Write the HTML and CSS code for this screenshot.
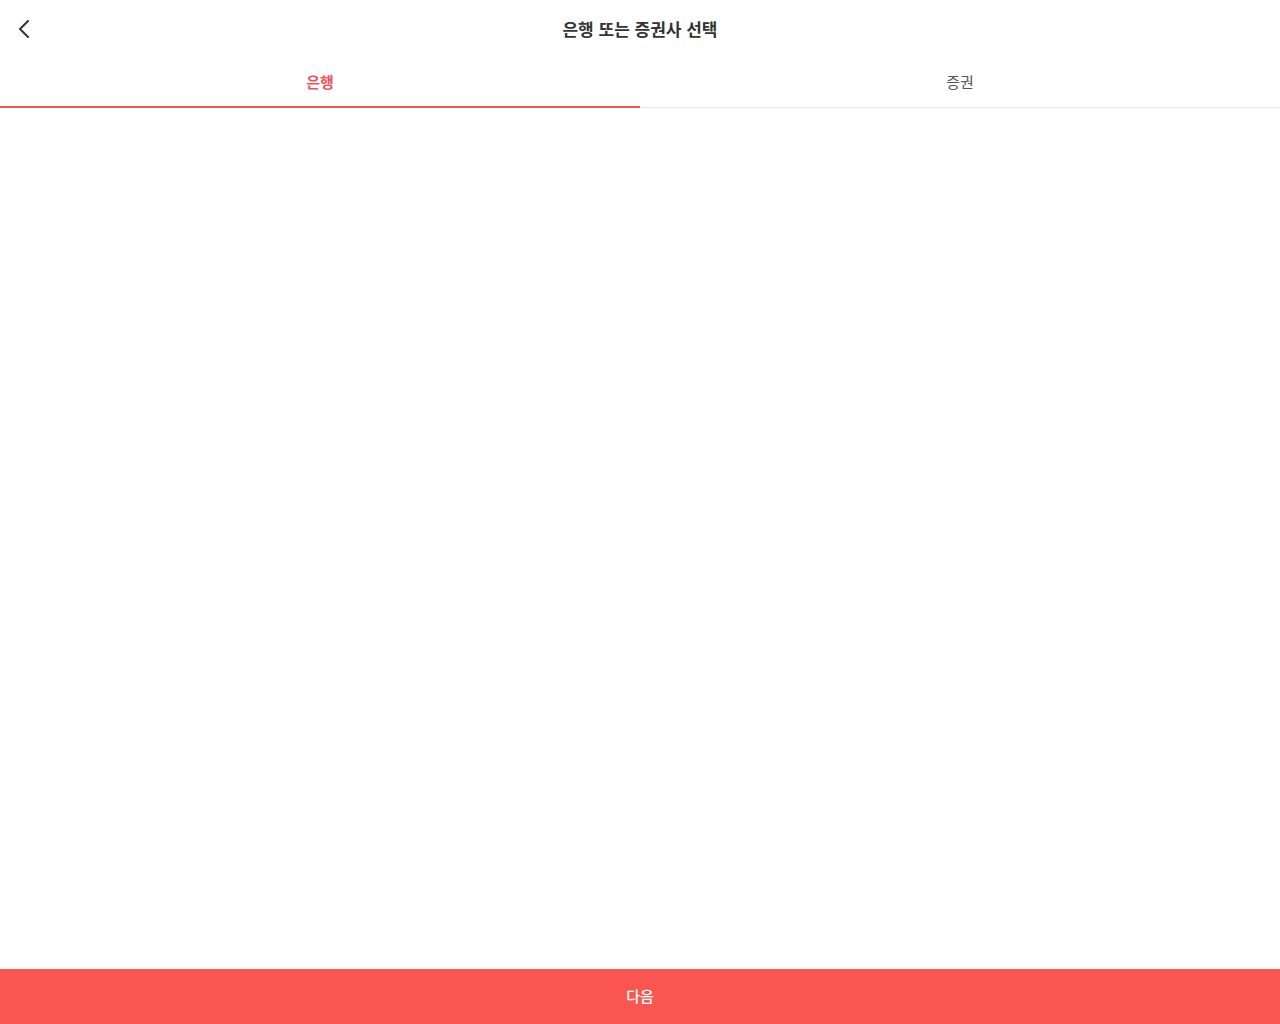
FILE: index.html
```html
<!DOCTYPE html>
<html lang="ko">
<head>
<meta charset="utf-8">
<title>은행 또는 증권사 선택</title>
<link rel="stylesheet" href="styles.css">
</head>
<body>
<div class="app">
  <header class="topbar">
    <button class="back" aria-label="뒤로">
      <svg width="14" height="18" viewBox="0 0 14 18"><path d="M11 1 L3 9 L11 17" fill="none" stroke="#333" stroke-width="2" stroke-linecap="round" stroke-linejoin="round"/></svg>
    </button>
    <h1 class="title">은행 또는 증권사 선택</h1>
  </header>
  <nav class="tabs">
    <div class="tab active">은행</div>
    <div class="tab">증권</div>
  </nav>
  <main class="content"></main>
  <button class="next">다음</button>
</div>
</body>
</html>
```
FILE: styles.css
```css
html, body {
  margin: 0;
  padding: 0;
  height: 100%;
  background: #fff;
}
body {
  font-family: "Noto Sans CJK KR", "Noto Sans", sans-serif;
  color: #333;
}
.app {
  display: flex;
  flex-direction: column;
  height: 100vh;
}
.topbar {
  position: relative;
  height: 56px;
  display: flex;
  align-items: center;
  justify-content: center;
  box-sizing: border-box;
  padding-top: 1px;
}
.back {
  position: absolute;
  left: 14px;
  top: 19px;
  width: 20px;
  height: 20px;
  padding: 0;
  border: 0;
  background: none;
  display: flex;
  align-items: center;
  justify-content: center;
}
.title {
  margin: 0;
  font-size: 17px;
  font-weight: 700;
  color: #333;
}
.tabs {
  display: flex;
  height: 51px;
  border-bottom: 1px solid #e5e5e5;
}
.tab {
  flex: 1;
  display: flex;
  align-items: center;
  justify-content: center;
  font-size: 15px;
  font-weight: 400;
  color: #555;
  box-sizing: border-box;
}
.tab.active {
  color: #f2525a;
  font-weight: 700;
  border-bottom: 2px solid #f5514d;
  margin-bottom: -1px;
}
.content {
  flex: 1;
}
.next {
  height: 55px;
  border: 0;
  background: #f95551;
  color: #fff;
  font-family: "Noto Sans CJK KR", "Noto Sans", sans-serif;
  font-size: 15px;
  font-weight: 500;
  width: 100%;
  padding: 0 0 2px;
}
```
